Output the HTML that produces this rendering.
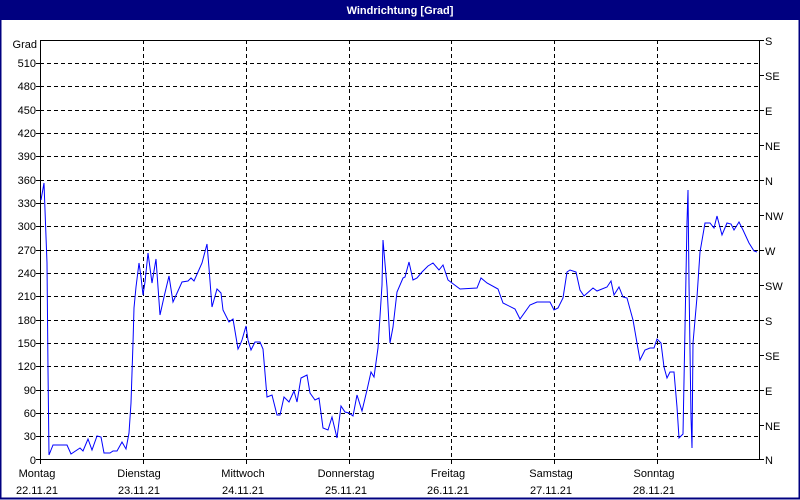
<!DOCTYPE html>
<html><head><meta charset="utf-8"><style>
html,body{margin:0;padding:0;background:#fff;}
svg{display:block;font-family:"Liberation Sans","DejaVu Sans",sans-serif;font-size:11px;}
</style></head><body>
<svg width="800" height="500" viewBox="0 0 800 500" xmlns="http://www.w3.org/2000/svg">
<rect x="0" y="0" width="800" height="500" fill="#fff"/>
<rect x="0.5" y="0.5" width="799" height="498" fill="none" stroke="#000080" stroke-width="2"/>
<rect x="0" y="0" width="800" height="20" fill="#000080"/>
<text x="400" y="14" fill="#fff" font-weight="bold" text-anchor="middle">Windrichtung [Grad]</text>
<g stroke="#000" stroke-width="1" stroke-dasharray="4,3" shape-rendering="crispEdges">
<line x1="40" x2="760" y1="63.5" y2="63.5"/><line x1="40" x2="760" y1="86.5" y2="86.5"/>
<line x1="40" x2="760" y1="110.5" y2="110.5"/><line x1="40" x2="760" y1="133.5" y2="133.5"/>
<line x1="40" x2="760" y1="156.5" y2="156.5"/><line x1="40" x2="760" y1="180.5" y2="180.5"/>
<line x1="40" x2="760" y1="203.5" y2="203.5"/><line x1="40" x2="760" y1="226.5" y2="226.5"/>
<line x1="40" x2="760" y1="250.5" y2="250.5"/><line x1="40" x2="760" y1="273.5" y2="273.5"/>
<line x1="40" x2="760" y1="296.5" y2="296.5"/><line x1="40" x2="760" y1="320.5" y2="320.5"/>
<line x1="40" x2="760" y1="343.5" y2="343.5"/><line x1="40" x2="760" y1="366.5" y2="366.5"/>
<line x1="40" x2="760" y1="390.5" y2="390.5"/><line x1="40" x2="760" y1="413.5" y2="413.5"/>
<line x1="40" x2="760" y1="436.5" y2="436.5"/>
<line x1="143.5" x2="143.5" y1="40" y2="460"/><line x1="246.5" x2="246.5" y1="40" y2="460"/>
<line x1="349.5" x2="349.5" y1="40" y2="460"/><line x1="451.5" x2="451.5" y1="40" y2="460"/>
<line x1="554.5" x2="554.5" y1="40" y2="460"/><line x1="657.5" x2="657.5" y1="40" y2="460"/>
</g>
<g stroke="#000" stroke-width="1" shape-rendering="crispEdges">
<rect x="40.5" y="40.5" width="719" height="419" fill="none"/>
<path d="M36 63.5H40M36 86.5H40M36 110.5H40M36 133.5H40M36 156.5H40M36 180.5H40M36 203.5H40M36 226.5H40M36 250.5H40M36 273.5H40M36 296.5H40M36 320.5H40M36 343.5H40M36 366.5H40M36 390.5H40M36 413.5H40M36 436.5H40M36 459.5H40"/>
<path d="M760 40.5H764M760 75.5H764M760 110.5H764M760 145.5H764M760 180.5H764M760 215.5H764M760 250.5H764M760 285.5H764M760 320.5H764M760 355.5H764M760 390.5H764M760 425.5H764M760 459.5H764"/>
<path d="M40.5 460V464M143.5 460V464M246.5 460V464M349.5 460V464M451.5 460V464M554.5 460V464M657.5 460V464"/>
</g>
<g text-anchor="end" fill="#000">
<text x="37" y="48">Grad</text>
<text x="36" y="67">510</text><text x="36" y="90">480</text><text x="36" y="114">450</text>
<text x="36" y="137">420</text><text x="36" y="160">390</text><text x="36" y="184">360</text>
<text x="36" y="207">330</text><text x="36" y="230">300</text><text x="36" y="254">270</text>
<text x="36" y="277">240</text><text x="36" y="300">210</text><text x="36" y="324">180</text>
<text x="36" y="347">150</text><text x="36" y="370">120</text><text x="36" y="394">90</text>
<text x="36" y="417">60</text><text x="36" y="440">30</text><text x="36" y="464">0</text>
</g>
<g fill="#000">
<text x="765" y="45">S</text><text x="765" y="80">SE</text><text x="765" y="115">E</text>
<text x="765" y="150">NE</text><text x="765" y="185">N</text><text x="765" y="220">NW</text>
<text x="765" y="255">W</text><text x="765" y="290">SW</text><text x="765" y="325">S</text>
<text x="765" y="360">SE</text><text x="765" y="395">E</text><text x="765" y="430">NE</text>
<text x="765" y="464">N</text>
</g>
<g text-anchor="middle" fill="#000">
<text x="37" y="477">Montag</text><text x="37" y="494">22.11.21</text>
<text x="139" y="477">Dienstag</text><text x="139" y="494">23.11.21</text>
<text x="243" y="477">Mittwoch</text><text x="243" y="494">24.11.21</text>
<text x="346" y="477">Donnerstag</text><text x="346" y="494">25.11.21</text>
<text x="448" y="477">Freitag</text><text x="448" y="494">26.11.21</text>
<text x="551" y="477">Samstag</text><text x="551" y="494">27.11.21</text>
<text x="654" y="477">Sonntag</text><text x="654" y="494">28.11.21</text>
</g>
<polyline fill="none" stroke="#0000ff" stroke-width="1" points="41,200 44,183 45,210 47,263 48,370 49,455 53,445 67,445 71,454 80,448 83,451 88,439 92,450 97,436 101,437 104,453 110,453 113,451 117,451 122,442 126,449 129,433 131,403 133,343 134,308 136,287 139,263 141,277 143,295 145,282 148,253 152,283 156,259 160,315 164,297 169,276 173,302 182,282 188,281 191,278 194,281 202,263 207,244 209,268 212,307 217,289 221,293 223,310 229,322 233,319 238,349 240,345 242,340 246,326 248,340 251,350 255,342 260,342 263,349 267,397 272,395 277,415 280,415 284,397 289,402 294,391 297,402 301,378 307,375 310,393 315,400 319,398 323,428 328,430 332,417 337,438 341,406 345,412 349,413 353,416 357,395 362,411 367,390 371,372 374,377 378,348 382,285 383,240 387,287 390,343 393,327 397,292 403,278 405,277 409,262 413,280 417,278 422,272 428,266 433,263 439,270 443,265 448,280 460,289 477,288 481,278 487,283 498,289 503,303 515,309 520,319 530,305 537,302 550,302 554,310 558,308 563,298 567,272 570,270 576,272 580,290 584,296 593,288 597,291 607,287 611,281 614,295 619,287 623,297 627,298 633,320 637,343 640,360 645,350 650,348 654,348 657,339 661,343 664,367 667,378 670,372 674,372 677,407 679,438 683,434 687,222 688,190 689,283 691,417 692,448 693,343 697,297 700,252 705,223 710,223 714,228 717,216 722,235 727,223 731,224 734,230 739,222 743,230 749,243 754,251 757,252"/>
</svg>
</body></html>
